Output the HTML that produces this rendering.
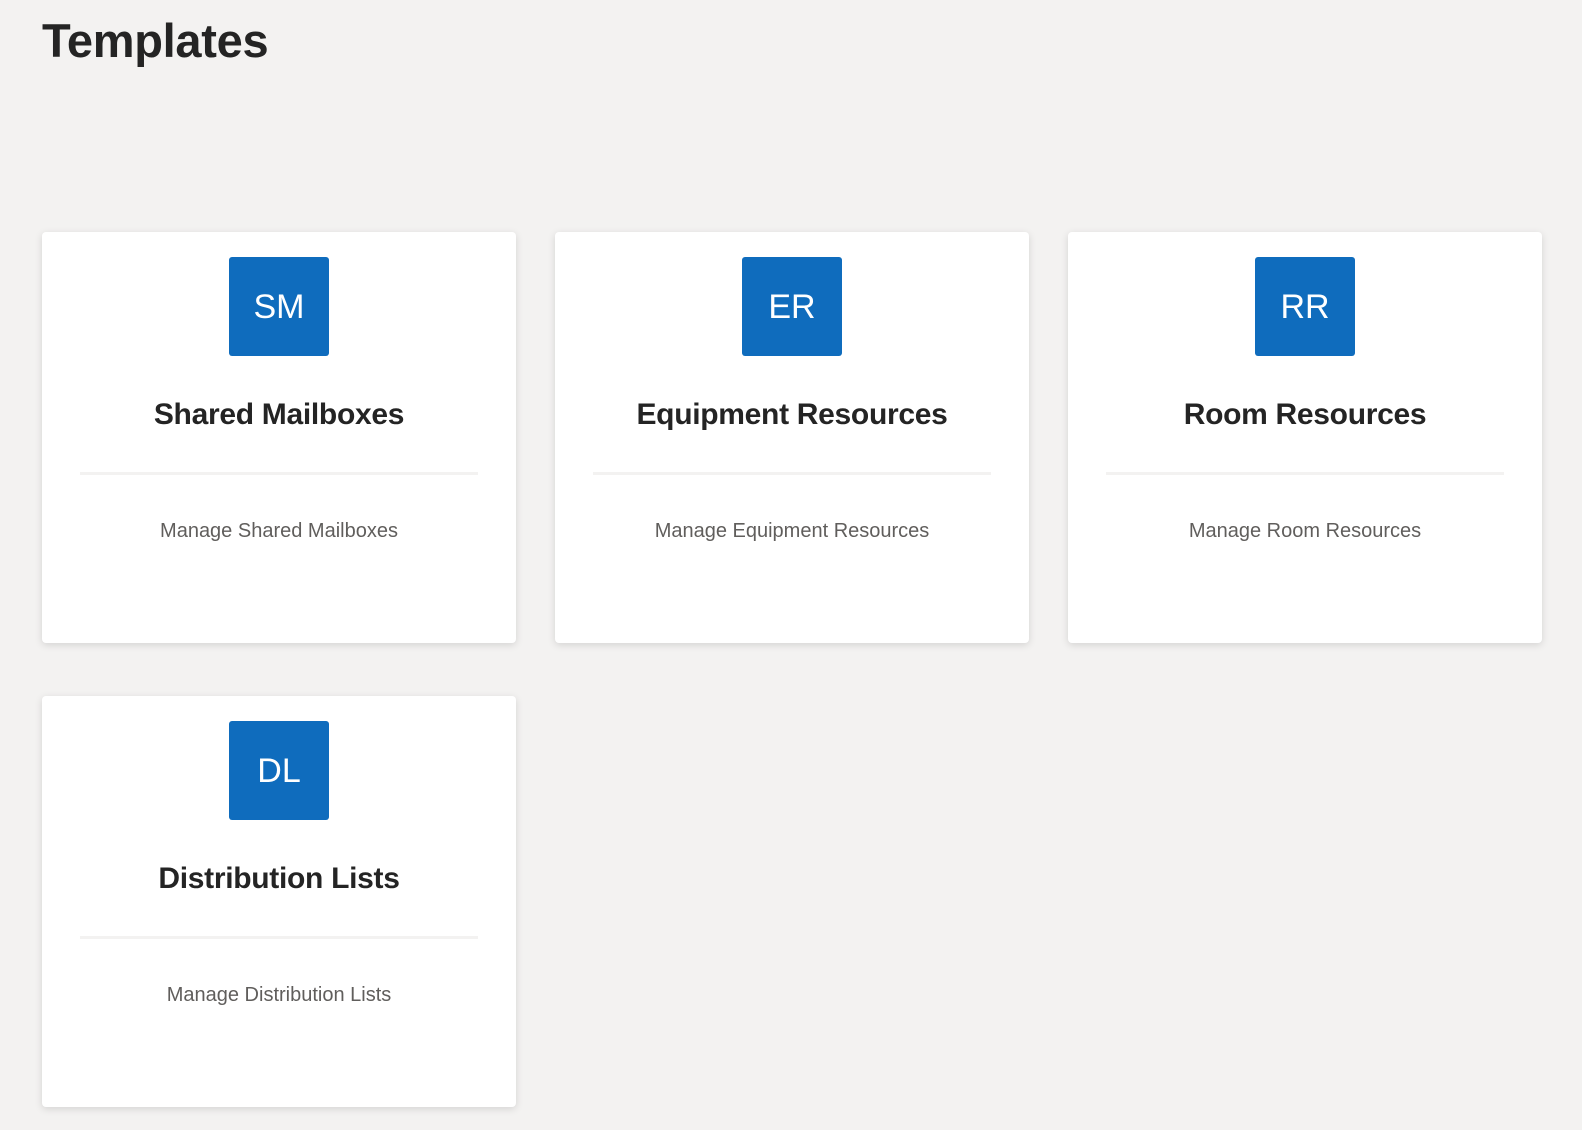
<!DOCTYPE html>
<html><head><style>
body{margin:0;background:#f3f2f1;font-family:"Liberation Sans",sans-serif;width:1582px;height:1130px;overflow:hidden;position:relative}
h1{position:absolute;left:42px;top:13px;margin:0;font-size:47px;font-weight:bold;color:#242424;letter-spacing:-0.3px}
.card{position:absolute;width:474px;height:411px;background:#fff;border-radius:4px;box-shadow:0 2px 8px rgba(0,0,0,0.13)}
.ic{position:absolute;left:187px;top:25px;width:100px;height:99px;background:#0f6cbd;border-radius:3px;color:#fff;font-size:34px;text-align:center;line-height:101px}
.t{position:absolute;left:0;right:0;top:166px;text-align:center;font-size:30px;font-weight:bold;color:#242424;letter-spacing:-0.3px}
.d{position:absolute;left:38px;width:398px;top:240px;height:3px;background:#f3f2f1}
.s{position:absolute;left:0;right:0;top:288px;text-align:center;font-size:20px;color:#605e5c}
</style></head><body>
<h1>Templates</h1>
<div class="card" style="left:42px;top:232px"><div class="ic">SM</div><div class="t">Shared Mailboxes</div><div class="d"></div><div class="s">Manage Shared Mailboxes</div></div>
<div class="card" style="left:555px;top:232px"><div class="ic">ER</div><div class="t">Equipment Resources</div><div class="d"></div><div class="s">Manage Equipment Resources</div></div>
<div class="card" style="left:1068px;top:232px"><div class="ic">RR</div><div class="t">Room Resources</div><div class="d"></div><div class="s">Manage Room Resources</div></div>
<div class="card" style="left:42px;top:696px"><div class="ic">DL</div><div class="t">Distribution Lists</div><div class="d"></div><div class="s">Manage Distribution Lists</div></div>
</body></html>
